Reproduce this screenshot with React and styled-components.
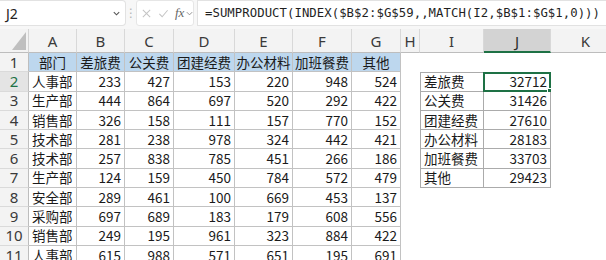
import React from "react";
import styled, { createGlobalStyle, css } from "styled-components";

const Global = createGlobalStyle`
  html, body { margin: 0; padding: 0; background: #fff; }
  body { width: 606px; height: 260px; overflow: hidden; }
  * { box-sizing: border-box; }
`;

const Page = styled.div`
  width: 606px;
  height: 260px;
  overflow: hidden;
  background: #fff;
  display: flex;
  flex-direction: column;
`;

const FormulaBar = styled.div`
  height: 29px;
  display: flex;
  align-items: stretch;
  background: #f7f7f7;
  padding-bottom: 3px;
  flex: none;
`;

const NameBox = styled.div`
  width: 126px;
  background: #fff;
  border: 1px solid #e2e2e2;
  border-left: none;
  border-radius: 0 4px 4px 0;
  display: flex;
  align-items: center;
  justify-content: space-between;
  padding: 0 4px 0 6px;
  font-family: "Noto Sans", sans-serif;
  font-size: 14px;
  color: #222;
`;

const Chevron = styled.svg`
  width: 9px;
  height: 9px;
  flex: none;
`;

const Dots = styled.div`
  width: 10px;
  display: flex;
  align-items: center;
  justify-content: center;
  color: #b5b5b5;
  font-size: 12px;
  font-family: "DejaVu Sans", sans-serif;
`;

const FxGroup = styled.div`
  width: 58px;
  background: #fff;
  border: 1px solid #e6e6e6;
  border-radius: 3px;
  display: flex;
  align-items: center;
  gap: 6px;
  padding-left: 4px;
  margin-right: 3px;
`;

const FxIcon = styled.svg`
  width: 11px;
  height: 11px;
  flex: none;
`;

const Fx = styled.span`
  font-family: "Liberation Serif", serif;
  font-style: italic;
  font-size: 13px;
  color: #666;
  display: flex;
  align-items: center;
  gap: 1px;
`;

const FormulaInput = styled.div`
  flex: 1;
  background: #fff;
  border: 1px solid #e2e2e2;
  border-right: none;
  display: flex;
  align-items: center;
  padding-left: 7px;
  font-family: "DejaVu Sans Mono", "Liberation Mono", monospace;
  font-size: 12.3px;
  color: #1f1f1f;
  white-space: nowrap;
  letter-spacing: 0.05px;
`;

const Grid = styled.div`
  display: grid;
  grid-template-columns: 29px 48px 48px 49px 61px 58px 59px 49px 19px 64px 67px 70px;
  grid-template-rows: 24px repeat(11, 19.3px);
  font-family: "Noto Sans CJK SC", "Noto Sans", sans-serif;
  font-size: 13.5px;
  color: #1a1a1a;
`;

const Corner = styled.div`
  background: #f3f3f3;
  border-right: 1px solid #d4d4d4;
  border-bottom: 1px solid #bdbdbd;
  position: relative;
`;

const Triangle = styled.div`
  position: absolute;
  right: 2px;
  bottom: 2px;
  width: 0;
  height: 0;
  border-left: 14px solid transparent;
  border-bottom: 18px solid #bfbfbf;
`;

const ColHead = styled.div`
  background: ${(p) => (p.$active ? "#d3d3d3" : "#f3f3f3")};
  border-right: 1px solid #d8d8d8;
  border-bottom: ${(p) => (p.$active ? "2px solid #1e7145" : "1px solid #bdbdbd")};
  display: flex;
  align-items: center;
  justify-content: center;
  font-family: "Noto Sans", sans-serif;
  font-size: 15px;
  color: ${(p) => (p.$active ? "#2b2b2b" : "#3a3a3a")};
  padding-top: ${(p) => (p.$active ? "1px" : "0")};
`;

const RowHead = styled.div`
  background: ${(p) => (p.$active ? "#e4e4e4" : "#f3f3f3")};
  border-right: 1px solid #bdbdbd;
  border-bottom: 1px solid #dadada;
  display: flex;
  align-items: center;
  justify-content: center;
  font-family: "Noto Sans", sans-serif;
  font-size: 15px;
  color: ${(p) => (p.$active ? "#1e7145" : "#3a3a3a")};
  padding-bottom: 1px;
`;

const Cell = styled.div`
  position: relative;
  display: flex;
  align-items: center;
  justify-content: ${(p) =>
    p.$align === "right" ? "flex-end" : p.$align === "center" ? "center" : "flex-start"};
  padding: 0 3px 1px 3px;
  white-space: nowrap;
  background: ${(p) => (p.$fill ? "#bdd7ee" : "#fff")};
  ${(p) =>
    p.$border &&
    css`
      border-right: 1px solid ${p.$border};
      border-bottom: 1px solid ${p.$border};
    `}
  ${(p) => p.$bl && css`border-left: 1px solid ${p.$bl};`}
  ${(p) => p.$bt && css`border-top: 1px solid ${p.$bt};`}
`;

const Selection = styled.div`
  position: absolute;
  left: -1px;
  top: -1px;
  right: -1px;
  bottom: -1px;
  border: 2px solid #1e7145;
  pointer-events: none;
`;

const Handle = styled.div`
  position: absolute;
  right: -4px;
  bottom: -4px;
  width: 6px;
  height: 6px;
  background: #1e7145;
  border: 1px solid #fff;
`;

const cols = ["A", "B", "C", "D", "E", "F", "G", "H", "I", "J", "K"];

const header = ["部门", "差旅费", "公关费", "团建经费", "办公材料", "加班餐费", "其他"];

const data = [
  ["人事部", 233, 427, 153, 220, 948, 524],
  ["生产部", 444, 864, 697, 520, 292, 422],
  ["销售部", 326, 158, 111, 157, 770, 152],
  ["技术部", 281, 238, 978, 324, 442, 421],
  ["技术部", 257, 838, 785, 451, 266, 186],
  ["生产部", 124, 159, 450, 784, 572, 479],
  ["安全部", 289, 461, 100, 669, 453, 137],
  ["采购部", 697, 689, 183, 179, 608, 556],
  ["销售部", 249, 195, 961, 323, 884, 422],
  ["人事部", 615, 988, 571, 651, 195, 691],
];

const summary = [
  ["差旅费", 32712],
  ["公关费", 31426],
  ["团建经费", 27610],
  ["办公材料", 28183],
  ["加班餐费", 33703],
  ["其他", 29423],
];

const T1 = "#c2c2c2";
const T2 = "#ababab";

export default function App() {
  const rows = [];
  for (let r = 1; r <= 11; r++) {
    const cells = [];
    cells.push(
      <RowHead key="h" $active={r === 2}>
        {r}
      </RowHead>
    );
    for (let c = 0; c < 7; c++) {
      if (r === 1) {
        cells.push(
          <Cell key={c} $fill $align="center" $border={T1}>
            {header[c]}
          </Cell>
        );
      } else {
        const v = data[r - 2][c];
        cells.push(
          <Cell key={c} $align={c === 0 ? "left" : "right"} $border={T1}>
            {v}
          </Cell>
        );
      }
    }
    cells.push(<Cell key="H" />);
    const s = r >= 2 && r <= 7 ? summary[r - 2] : null;
    if (s) {
      cells.push(
        <Cell key="I" $border={T2} $bl={T2} $bt={r === 2 ? T2 : null}>
          {s[0]}
        </Cell>
      );
      cells.push(
        <Cell key="J" $align="right" $border={T2} $bt={r === 2 ? T2 : null}>
          {s[1]}
          {r === 2 && (
            <Selection>
              <Handle />
            </Selection>
          )}
        </Cell>
      );
    } else {
      cells.push(<Cell key="I" />);
      cells.push(<Cell key="J" />);
    }
    cells.push(<Cell key="K" />);
    rows.push(<React.Fragment key={r}>{cells}</React.Fragment>);
  }

  return (
    <Page>
      <Global />
      <FormulaBar>
        <NameBox>
          <span>J2</span>
          <Chevron viewBox="0 0 10 10">
            <path d="M2 3.5 L5 6.5 L8 3.5" fill="none" stroke="#555" strokeWidth="1.2" />
          </Chevron>
        </NameBox>
        <Dots>⋮</Dots>
        <FxGroup>
          <FxIcon viewBox="0 0 12 12">
            <path d="M2 2 L10 10 M10 2 L2 10" stroke="#c4c4c4" strokeWidth="1.1" fill="none" />
          </FxIcon>
          <FxIcon viewBox="0 0 12 12">
            <path d="M1.5 6.5 L4.5 9.5 L10.5 2.5" stroke="#c4c4c4" strokeWidth="1.1" fill="none" />
          </FxIcon>
          <Fx>
            fx
            <Chevron viewBox="0 0 10 10">
              <path d="M2 3.5 L5 6.5 L8 3.5" fill="none" stroke="#888" strokeWidth="1" />
            </Chevron>
          </Fx>
        </FxGroup>
        <FormulaInput>=SUMPRODUCT(INDEX($B$2:$G$59,,MATCH(I2,$B$1:$G$1,0)))</FormulaInput>
      </FormulaBar>
      <Grid>
        <Corner>
          <Triangle />
        </Corner>
        {cols.map((c) => (
          <ColHead key={c} $active={c === "J"}>
            {c}
          </ColHead>
        ))}
        {rows}
      </Grid>
    </Page>
  );
}
